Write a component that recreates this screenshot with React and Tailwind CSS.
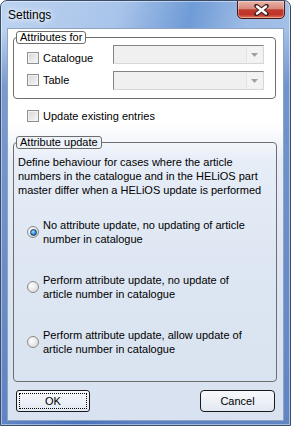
import React from "react";

const Check = () => (
  <span className="w-[12px] h-[12px] shrink-0 border border-[#8f8f8f] bg-[linear-gradient(135deg,#d6d6d6,#f8f8f8)] shadow-[inset_0_0_0_1px_#f2f2f2]" />
);

const Radio = ({ checked }) => (
  <span className="w-[12px] h-[12px] shrink-0 rounded-full border border-[#8a8a8a] bg-[radial-gradient(circle_at_35%_35%,#ffffff,#d2d2d2)] flex items-center justify-center">
    {checked && (
      <span className="w-[7px] h-[7px] rounded-full border border-[#103f70] bg-[radial-gradient(circle_at_40%_35%,#a4dcff,#2a7fcc_65%,#11508f)]" />
    )}
  </span>
);

const Combo = () => (
  <div className="w-[151px] h-[19px] flex border border-t-[#858585] border-l-[#858585] border-r-[#d8d8d8] border-b-[#d8d8d8] bg-[#f0f0f0]">
    <div className="flex-1" />
    <div className="w-[16px] my-[1px] mr-[1px] border-l border-[#e4e4e4] bg-[#f3f3f3] flex items-center justify-center">
      <svg width="7" height="4" viewBox="0 0 7 4">
        <path d="M0 0h7L3.5 4z" fill="#a0a0a0" />
      </svg>
    </div>
  </div>
);

const options = [
  { text: "No attribute update, no updating of article number in catalogue", checked: true },
  { text: "Perform attribute update, no update of article number in catalogue" },
  { text: "Perform attribute update, allow update of article number in catalogue" },
];

const App = () => {
  return (
    <div className="w-[291px] h-[426px] relative flex flex-col rounded-t-[7px] border border-[#394d68] overflow-hidden font-['Liberation_Sans',Arial,sans-serif] text-[11px] leading-[14px] text-black shadow-[inset_0_0_0_1px_rgba(255,255,255,0.45)] bg-[linear-gradient(180deg,rgba(70,110,185,0)_0%,rgba(70,110,185,0)_7%,rgba(70,110,185,0.55)_20%,rgba(55,95,175,0.65)_100%),linear-gradient(105deg,#bcd3f0_0%,#a9c4ea_30%,#6f9bd6_48%,#9dbbe5_62%,#b2cbeb_100%)]">
      <div className="h-[27px] relative flex items-center pl-[7px]">
        <span className="text-[12px] [text-shadow:0_0_5px_#fff,0_0_8px_#fff]">Settings</span>
        <div className="absolute top-[-1px] right-[5px] w-[48px] h-[19px] rounded-b-[5px] border border-[#4a1a15] bg-[linear-gradient(180deg,#e9b4a9_0%,#d88a7d_45%,#c23a2e_52%,#c03428_80%,#e2785c_100%)] shadow-[inset_0_0_0_1px_rgba(255,255,255,0.35)] flex items-center justify-center">
          <svg width="15" height="12" viewBox="0 0 15 12">
            <path d="M2.5 2L12.5 10M12.5 2L2.5 10" stroke="#3a2420" strokeWidth="4.5" strokeLinecap="round" />
            <path d="M3 2.5L12 9.5M12 2.5L3 9.5" stroke="#fff" strokeWidth="2.4" strokeLinecap="round" />
          </svg>
        </div>
      </div>

      <div className="mx-[6px] h-[393px] border border-[#8ea4c2] flex flex-col bg-[linear-gradient(180deg,#ffffff_0%,#ffffff_24%,#e6edf7_34%,#dde6f2_60%,#d8e2f0_100%)]">
        <fieldset className="mt-[2px] ml-[5px] mr-[7px] min-w-0 p-0 border border-[#6e6e6e] rounded-[4px]">
          <legend className="ml-[2px] px-[3px] h-[13px] leading-[11px] border border-[#6e6e6e] rounded-[3px] bg-white">
            Attributes for
          </legend>
          <div className="flex">
            <div className="pl-[13px] pt-[8px] flex flex-col gap-[10px]">
              <div className="h-[12px] flex items-center gap-[4px]">
                <Check />
                <span>Catalogue</span>
              </div>
              <div className="h-[12px] flex items-center gap-[4px]">
                <Check />
                <span>Table</span>
              </div>
            </div>
            <div className="ml-auto mr-[11px] pt-[1px] pb-[8px] flex flex-col gap-[7px]">
              <Combo />
              <Combo />
            </div>
          </div>
        </fieldset>

        <div className="mt-[10px] ml-[19px] h-[14px] flex items-center gap-[4px]">
          <Check />
          <span>Update existing entries</span>
        </div>

        <fieldset className="mt-[13px] ml-[5px] mr-[6px] min-w-0 p-0 border border-[#6e6e6e] rounded-[4px]">
          <legend className="ml-[2px] px-[3px] h-[13px] leading-[11px] border border-[#6e6e6e] rounded-[3px] bg-[#eef3fa]">
            Attribute update
          </legend>
          <p className="pt-[6px] pl-[4px] pr-[4px]">
            Define behaviour for cases where the article numbers in the catalogue and in the HELiOS part
            master differ when a HELiOS update is performed
          </p>
          <div className="mt-[21px] pb-[25px] pl-[13px] flex flex-col gap-[27px]">
            {options.map((o) => (
              <div key={o.text} className="flex items-center gap-[4px]">
                <Radio checked={o.checked} />
                <span className="w-[212px]">{o.text}</span>
              </div>
            ))}
          </div>
        </fieldset>

        <div className="mt-[8px] px-[8px] flex justify-between">
          <button className="w-[74px] h-[22px] rounded-[3px] border border-[#1a1a1a] bg-[linear-gradient(180deg,#f6f8fb_0%,#edf1f7_50%,#e2e9f3_100%)] outline-1 outline-dotted outline-black outline-offset-[-4px]">
            OK
          </button>
          <button className="w-[75px] h-[22px] rounded-[4px] border border-[#1a1a1a] bg-[linear-gradient(180deg,#f6f8fb_0%,#edf1f7_50%,#e2e9f3_100%)]">
            Cancel
          </button>
        </div>
      </div>
    </div>
  );
};

export default App;
